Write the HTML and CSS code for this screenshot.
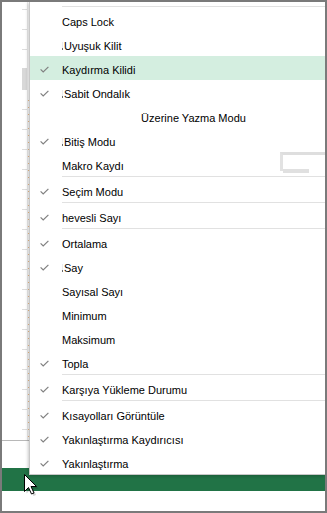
FILE: index.html
```html
<!DOCTYPE html>
<html lang="tr">
<head>
    <meta charset="UTF-8">
    <title>Durum Çubuğunu Özelleştir</title>
    <link rel="stylesheet" href="styles.css">
</head>
<body>
<div class="frame">

    <div class="sheet">
        <div class="grid">
            <div class="grid-blank"></div>
            <div class="row-heads"></div>
            <div class="dots"></div>
        </div>
        <div class="tabs"></div>
        <div class="status"></div>
        <div class="foot"></div>
    </div>

    <div class="menu">
        <div class="sep"></div>
        <div class="item"><span class="check"></span><span class="label">Caps Lock</span></div>
        <div class="item"><span class="check"></span><span class="label"><i class="tick"></i>Uyuşuk Kilit</span></div>
        <div class="item active"><span class="check on"><svg viewBox="0 0 9 7"><polyline points="0.6,3.4 3.2,6 8.4,0.8"/></svg></span><span class="label">Kaydırma Kilidi</span></div>
        <div class="item"><span class="check on"><svg viewBox="0 0 9 7"><polyline points="0.6,3.4 3.2,6 8.4,0.8"/></svg></span><span class="label"><i class="tick"></i>Sabit Ondalık</span></div>
        <div class="item"><span class="check"></span><span class="label center">Üzerine Yazma Modu</span></div>
        <div class="item"><span class="check on"><svg viewBox="0 0 9 7"><polyline points="0.6,3.4 3.2,6 8.4,0.8"/></svg></span><span class="label"><i class="tick"></i>Bitiş Modu</span></div>
        <div class="item"><span class="check"></span><span class="label">Makro Kaydı</span></div>
        <div class="sep"></div>
        <div class="item"><span class="check on"><svg viewBox="0 0 9 7"><polyline points="0.6,3.4 3.2,6 8.4,0.8"/></svg></span><span class="label">Seçim Modu</span></div>
        <div class="sep"></div>
        <div class="item"><span class="check on"><svg viewBox="0 0 9 7"><polyline points="0.6,3.4 3.2,6 8.4,0.8"/></svg></span><span class="label">hevesli Sayı</span></div>
        <div class="sep"></div>
        <div class="item"><span class="check on"><svg viewBox="0 0 9 7"><polyline points="0.6,3.4 3.2,6 8.4,0.8"/></svg></span><span class="label">Ortalama</span></div>
        <div class="item"><span class="check on"><svg viewBox="0 0 9 7"><polyline points="0.6,3.4 3.2,6 8.4,0.8"/></svg></span><span class="label"><i class="tick"></i>Say</span></div>
        <div class="item"><span class="check"></span><span class="label">Sayısal Sayı</span></div>
        <div class="item"><span class="check"></span><span class="label">Minimum</span></div>
        <div class="item"><span class="check"></span><span class="label">Maksimum</span></div>
        <div class="item"><span class="check on"><svg viewBox="0 0 9 7"><polyline points="0.6,3.4 3.2,6 8.4,0.8"/></svg></span><span class="label">Topla</span></div>
        <div class="sep"></div>
        <div class="item"><span class="check on"><svg viewBox="0 0 9 7"><polyline points="0.6,3.4 3.2,6 8.4,0.8"/></svg></span><span class="label">Karşıya Yükleme Durumu</span></div>
        <div class="sep"></div>
        <div class="item"><span class="check on"><svg viewBox="0 0 9 7"><polyline points="0.6,3.4 3.2,6 8.4,0.8"/></svg></span><span class="label">Kısayolları Görüntüle</span></div>
        <div class="item"><span class="check on"><svg viewBox="0 0 9 7"><polyline points="0.6,3.4 3.2,6 8.4,0.8"/></svg></span><span class="label">Yakınlaştırma Kaydırıcısı</span></div>
        <div class="item"><span class="check on"><svg viewBox="0 0 9 7"><polyline points="0.6,3.4 3.2,6 8.4,0.8"/></svg></span><span class="label">Yakınlaştırma</span></div>

        <div class="ghost"></div>
    </div>

    <!-- mouse pointer over the status bar -->
    <svg class="cursor" viewBox="0 0 15 23">
        <path class="cursor-shadow" d="M2.5,2.5 L2.5,19.5 L6.5,15.5 L9.5,22 L12,21 L9,14.5 L14.5,14.5 Z"/>
        <path class="cursor-arrow" d="M0.5,0.5 L0.5,17.5 L4.5,13.5 L7.5,20 L10,19 L7,12.5 L12.5,12.5 Z"/>
    </svg>

</div>
</body>
</html>
```

FILE: styles.css
```css
body {
    margin: 0;
    font-family: "Liberation Sans", Arial, sans-serif;
    font-size: 11px;
    color: #000;
}

.frame {
    position: relative;
    width: 327px;
    height: 513px;
    box-sizing: border-box;
    border: 2px solid #7a7a7a;
    background: #fff;
    overflow: hidden;
}

/* spreadsheet behind the menu */

.sheet {
    display: flex;
    flex-direction: column;
    height: 100%;
}

.grid {
    display: flex;
    height: 438px;
}

.grid-blank {
    width: 20px;
}

.row-heads {
    width: 5px;
    border-right: 1px solid #ebebeb;
    background: linear-gradient(#d8d8d8, #d8d8d8) 0 66px / 100% 22px no-repeat,
    repeating-linear-gradient(to bottom, transparent 0 7px, #dddddd 7px 8px, transparent 8px 20px);
}

.dots {
    width: 1px;
    background: repeating-linear-gradient(to bottom, #f2bf8a 0 1px, transparent 1px 7px) 0 98px / 1px 340px no-repeat;
}

.tabs {
    height: 27px;
    border-top: 1px solid #b8b8b8;
}

.status {
    height: 23px;
    background: #217346;
}

.foot {
    flex: 1;
}

/* context menu */

.menu {
    position: absolute;
    top: 0;
    left: 27px;
    right: 0;
    padding-top: 4px;
    background: #fff;
    border-left: 1px solid #c8c8c8;
    border-bottom: 1px solid #c8c8c8;
    box-shadow: -1px 1px 3px rgba(0, 0, 0, .22);
}

.sep {
    height: 2px;
    margin-left: 32px;
    box-sizing: border-box;
    border-top: 1px solid #e1e1e1;
}

.item {
    display: flex;
    align-items: center;
    height: 24px;
    padding-top: 3px;
    box-sizing: border-box;
}

.item.active {
    background: #d4eee0;
}

.check {
    width: 32px;
    flex: none;
    display: flex;
    padding-left: 10px;
    box-sizing: border-box;
}

.check svg {
    width: 9px;
    height: 7px;
    fill: none;
    stroke: #808080;
    stroke-width: 1.2;
}

.label {
    flex: 1;
    white-space: nowrap;
}

.label.center {
    text-align: center;
}

.tick {
    display: inline-block;
    width: 1px;
    height: 8px;
    margin-right: 1px;
    vertical-align: 0;
    background: linear-gradient(to bottom, #ececec 0 70%, #6a6a6a 70%);
}

.ghost {
    position: absolute;
    left: 250px;
    top: 150px;
    width: 42px;
    height: 16px;
    border-top: 3px solid #dedede;
    border-left: 3px solid #e2e2e2;
}

.ghost::after {
    content: "";
    position: absolute;
    left: 0;
    bottom: -2px;
    width: 26px;
    height: 4px;
    background: #e0e0e0;
}

.cursor {
    position: absolute;
    left: 22px;
    top: 472px;
    width: 15px;
    height: 23px;
}

.cursor-shadow {
    fill: rgba(0, 0, 0, .18);
}

.cursor-arrow {
    fill: #fff;
    stroke: #000;
    stroke-width: 1;
    stroke-linejoin: round;
}
```
